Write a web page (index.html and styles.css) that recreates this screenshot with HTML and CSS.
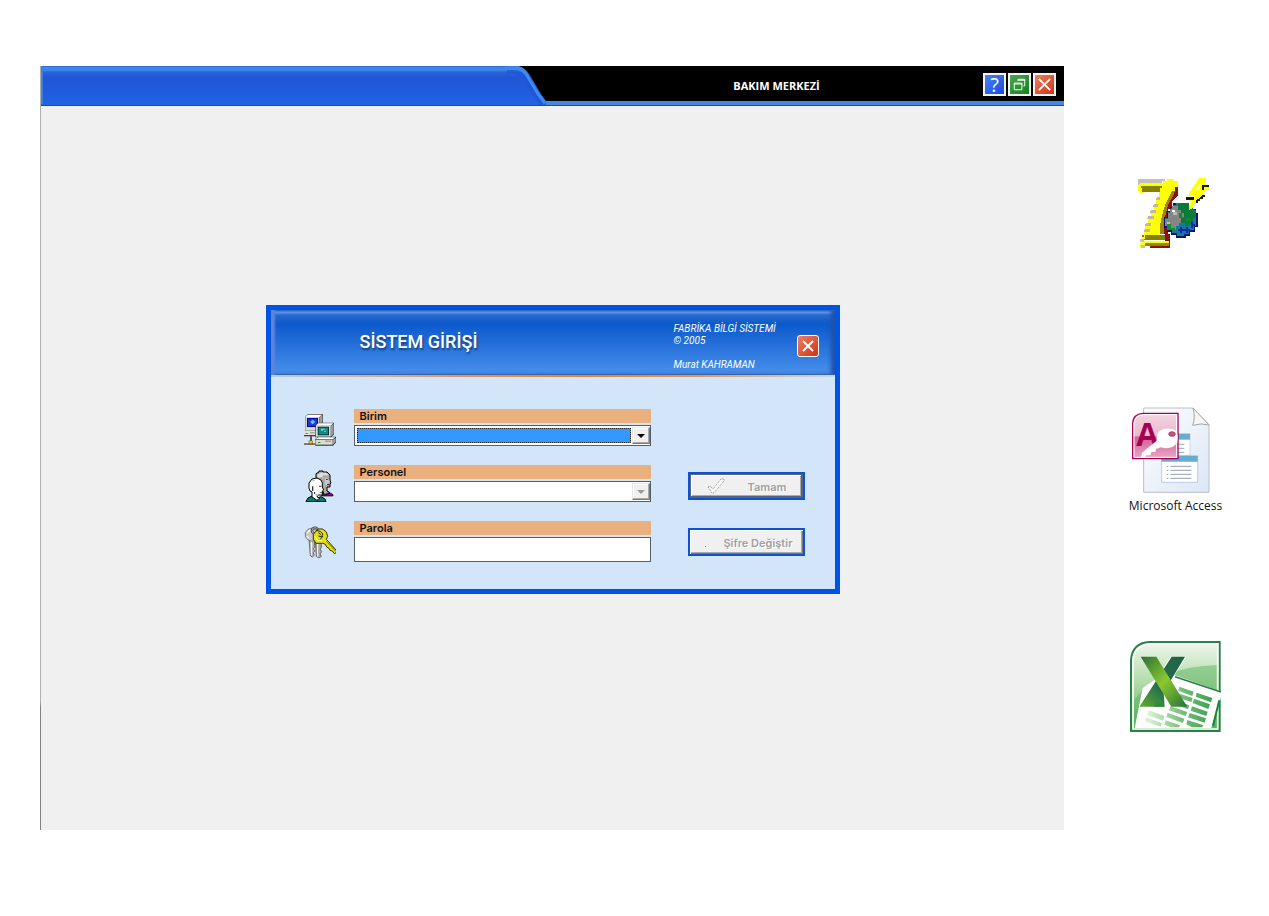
FILE: index.html
```html
<!DOCTYPE html>
<html lang="tr">
<head>
<meta charset="utf-8">
<title>Bakım Merkezi</title>
<link rel="stylesheet" href="styles.css">
</head>
<body class="desktop">
<main class="window">
  <header class="titlebar">
    <svg class="tab" viewBox="0 0 505 40" aria-hidden="true">
      <defs>
        <linearGradient id="tabFill" x1="0" y1="0" x2="0" y2="1">
          <stop offset="0" stop-color="#2860c8"/><stop offset=".03" stop-color="#3c88ea"/>
          <stop offset=".1" stop-color="#3c86e8"/><stop offset=".16" stop-color="#2a63dc"/>
          <stop offset=".3" stop-color="#2055d6"/><stop offset="1" stop-color="#2064e6"/>
        </linearGradient>
      </defs>
      <path d="M0 0H478Q486 3 490 11L500 28L505 35V40H0Z" fill="url(#tabFill)"/>
      <path d="M466 6H475Q482 8 486 16L500 39" fill="none" stroke="#2055d6" stroke-width="4" opacity=".7"/>
      <path d="M464 2H477Q483 4 487 11L497 28L504 37" fill="none" stroke="#3f8bed" stroke-width="3"/>
      <path d="M1 0V38" stroke="#3c80e4" stroke-width="2"/>
      <path d="M0 39.500H505" stroke="#1a4aac"/>
    </svg>
    <h1 class="app-name">BAKIM MERKEZİ</h1>
    <div class="controls">
      <button class="control help" type="button" aria-label="Yardım">?</button>
      <button class="control restore" type="button" aria-label="Geri yükle">
        <svg viewBox="0 0 20 20"><path d="M4.500 8.500H12.500V15.500H4.500ZM4 9.500H13M8.500 6V4.500H15.500V11.500H14M8 5.500H16" fill="none" stroke="#fff"/></svg>
      </button>
      <button class="control close" type="button" aria-label="Kapat">
        <svg viewBox="0 0 20 20"><path d="M4 4L16 16M16 4L4 16" stroke="#fff" stroke-width="2"/></svg>
      </button>
    </div>
  </header>
  <div class="workspace">
    <form class="dialog">
      <header class="banner">
        <h2 class="dialog-title">SİSTEM GİRİŞİ</h2>
        <p class="credits">FABRİKA BİLGİ SİSTEMİ<br>© 2005<br><br>Murat KAHRAMAN</p>
        <button class="control close dialog-close" type="button" aria-label="Pencereyi kapat">
          <svg viewBox="0 0 20 20"><path d="M5 5L15 15M15 5L5 15" stroke="#fff" stroke-width="2"/></svg>
        </button>
      </header>
      <div class="fields">
        <svg class="field-icon" viewBox="42 42 96 96" aria-hidden="true">
          <path d="M45 51L54 42H99V84L90 93H45Z" fill="#505050"/>
          <path d="M46 51L54 44H96L88 51Z" fill="#fff"/><path d="M46 51H87V90H46Z" fill="#d8d8d0"/><path d="M88 52L97 45V82L88 90Z" fill="#a0a098"/>
          <path d="M51 54H84V81H51Z" fill="#0000a0"/><path d="M54 57H81V78H54Z" fill="#1c38d8"/><path d="M65 60H71V63H74V69H71V72H65V69H62V63H65Z" fill="#70b8ff"/>
          <path d="M42 92H78V109H42Z" fill="#444"/><path d="M42 91H78V105H42Z" fill="#e0e0d8"/><path d="M47 99H53V102H47Z" fill="#00b020"/><path d="M60 97H74V100H60Z" fill="#888"/>
          <path d="M60 108H66V124H60Z" fill="#555"/><path d="M42 126H77V130H42Z" fill="#eee"/><path d="M42 130H77V134H42Z" fill="#444"/><path d="M56 122H68V133H56Z" fill="#8a5800"/><path d="M58 123H66V130H58Z" fill="#ffb818"/>
          <path d="M76 77L84 68H132V103L124 112H76Z" fill="#404040"/>
          <path d="M77 77L85 70H130L122 77Z" fill="#fff"/><path d="M78 77H122V110H78Z" fill="#dedede"/><path d="M123 77L131 71V102L123 109Z" fill="#999"/>
          <path d="M83 80H117V106H83Z" fill="#003838"/><path d="M86 83H114V103H86Z" fill="#168888"/><path d="M93 86H105V89H99V92H93ZM102 92H108V95H102Z" fill="#78d8c8"/>
          <path d="M76 117L84 110H138V127L129 137H76Z" fill="#303030"/><path d="M77 117L85 112H136L128 118Z" fill="#fff"/><path d="M77 119H128V134H77Z" fill="#dcdcd4"/><path d="M129 119L137 113V126L129 133Z" fill="#a0a0a0"/><path d="M84 126H91V129H84Z" fill="#00b020"/><path d="M105 122H124V125H105Z" fill="#888"/>
        </svg>
        <div class="field">
          <label for="birim">Birim</label>
          <div class="combo">
            <select id="birim" class="selected"><option></option></select>
            <span class="arrow" aria-hidden="true"></span>
          </div>
        </div>
        <svg class="field-icon" viewBox="42 210 96 96" aria-hidden="true">
          <path d="M95 279L113 274L129 284V288H95Z" fill="#880088" stroke="#000" stroke-width="2"/>
          <path d="M78 234V221L87 216V213H99V216H111L120 225V240L123 249L120 252V261H111V273L120 279L103 284L90 255Z" fill="#aaa" stroke="#000" stroke-width="3"/>
          <path d="M82 226L92 218H108L116 226H98V232H82Z" fill="#ddd"/>
          <path d="M105 235H113V241H118V248H113V255H105Z" fill="#ccc"/><path d="M108 237H113V240H108ZM111 252H119V255H111Z" fill="#333"/>
          <path d="M48 305L54 294L66 288L75 297L93 290L105 297L108 305Z" fill="#087878" stroke="#000" stroke-width="3"/>
          <path d="M57 264V249L66 237L81 234L93 240L97 249V261L101 270L97 273V285H84L81 291L90 294L81 301L66 291V276L60 273Z" fill="#fff" stroke="#000" stroke-width="3"/>
          <path d="M66 259H70V273H66ZM87 257H94V260H87ZM89 277H97V279H89ZM72 276H75V282H72Z" fill="#333"/>
          <path d="M77 281H85V288H77ZM66 241H75V244H66Z" fill="#bbb"/>
        </svg>
        <div class="field">
          <label for="personel">Personel</label>
          <div class="combo">
            <select id="personel" disabled><option></option></select>
            <span class="arrow muted" aria-hidden="true"></span>
          </div>
        </div>
        <button class="action raised" type="button" disabled>
          <svg class="tick" viewBox="0 0 18 17" aria-hidden="true"><path d="M1 9L3 8L6 11L14 1H17V3L7 15H5Z" fill="#fafafa" stroke="#888" stroke-dasharray="1 1"/></svg>
          <span>Tamam</span>
        </button>
        <svg class="field-icon" viewBox="42 78 96 96" aria-hidden="true">
          <path d="M57 115L61 167L67 171L73 166L70 158L75 153L70 147L74 141L73 115Z" fill="#b8b8b8" stroke="#333" stroke-width="2"/>
          <path d="M76 118L79 169L86 174L94 169L90 162L95 155L91 148L94 141V118Z" fill="#aaa" stroke="#333" stroke-width="2"/>
          <path d="M64 119V166M83 124V170" stroke="#fff" stroke-width="3"/>
          <path d="M66 84L55 87L46 97V110L54 120L66 124L78 119L84 108L79 91Z" fill="#c8c8c8" stroke="#555" stroke-width="2"/>
          <path d="M52 98L60 90M51 108L57 115" stroke="#fff" stroke-width="4"/>
          <circle cx="75" cy="92" r="9" fill="none" stroke="#333" stroke-width="7"/><circle cx="75" cy="92" r="9" fill="none" stroke="#bbb" stroke-width="3"/>
          <path d="M84 87H98L109 96L113 109L109 118L139 151V158L133 161L127 153L120 151L117 145L111 142L105 132L98 130L79 130L70 119V103Z" fill="#e3df16" stroke="#333300" stroke-width="3"/>
          <path d="M108 123L136 153" stroke="#8c8700" stroke-width="3"/><path d="M75 108L83 122H96" fill="none" stroke="#ffff80" stroke-width="4"/>
          <path d="M80 91L92 95L99 102L94 110L85 108M91 118L99 108M85 98L93 104" fill="none" stroke="#222" stroke-width="3"/>
        </svg>
        <div class="field">
          <label for="parola">Parola</label>
          <input id="parola" class="password" type="password">
        </div>
        <button class="action" type="button" disabled><span class="dot" aria-hidden="true"></span><span>Şifre Değiştir</span></button>
      </div>
    </form>
  </div>
</main>
<aside class="shortcuts">
  <svg class="shortcut-seven" viewBox="36 36 216 216" shape-rendering="crispEdges" role="img" aria-label="7">
    <path d="M148 66H159V90L150 102L141 108V132H129V207H135V249H75V240H120V207H112V160L124 117L139 81Z" fill="#901010"/>
    <path d="M39 42H120V48H111V54H45V66H39Z" fill="#c0c0c0"/>
    <path d="M39 60L48 54H114V48H126V42H147V48H159V66H150V81H141L130 108L123 129L117 168V207H57V192H60V177H69V159H78V138H87V120H93V99H102V81H54V84H45V78H39Z" fill="#ff0"/>
    <path d="M48 63H111V69H105V81H51V69H48Z" fill="#858000"/>
    <path d="M141 78H150L144 93L132 114L126 132L117 168V207H105V180L111 153L120 120Z" fill="#9c8700"/>
    <path d="M96 96H105V105H93ZM87 117H100V126H84ZM78 135H94V144H75ZM69 153H87V163H66ZM63 174H78V183H60ZM60 192H75V200H57Z" fill="#c0b8a0"/>
    <path d="M51 209H120V225H51Z" fill="#858000"/><path d="M57 204H102V210H60V222H54V228H132V234H60V249H45V234H51V216H57Z" fill="#ff0"/>
    <path d="M45 222H57V231H45ZM48 240H60V249H48Z" fill="#c0c0c0"/><path d="M60 234H132V243H60Z" fill="#908800"/>
    <path d="M153 114H192V120H204V132H213V144H219V186H210V201H195V213H183V219H153V210H138V201H126V189H117V156H126V138H135V126H144V114Z" fill="#001878"/>
    <path d="M153 114H192V123H204V135H213V183H207V195H192V207H177V213H156V204H141V195H129V183H120V159H129V141H138V129H144V120H153Z" fill="#1479a2"/>
    <path d="M141 123H168V141H177V156H171V174H162V183H153V195H138V183H120V162H129V144H135V132H141Z" fill="#858585"/>
    <path d="M159 114H192V132H207V141H213V159H204V177H192V183H180V174H168V159H177V144H168V135H159Z" fill="#087b38"/>
    <path d="M144 141H156V150H144ZM126 171H135V180H126Z" fill="#bbb"/><path d="M141 135H150V142H141Z" fill="#fff"/>
    <path d="M126 177H138V189H150V201H141V195H126ZM162 144H171V159H162ZM183 159H195V168H183Z" fill="#158a30"/>
    <path d="M165 186H171V192H177V198H171V204H165V198H159V192H165ZM183 186H189V192H195V198H189V204H183V198H177V192H183ZM198 171H204V177H210V183H204V189H198Z" fill="#042ca0"/>
    <path d="M222 39H243V51L237 66H252V75H243L231 93L219 105L204 120V129L192 135V123L201 108H195V102H207V93H189L195 81L213 54Z" fill="#ff0"/>
    <path d="M183 96H207V105H183ZM231 60H252V67H237V75H231ZM231 90H240V96H234V102H225V108H219V114H213V105L225 99Z" fill="#181800"/>
    <path d="M213 66H219V60H225V54H231V63H225V75H213Z" fill="#ffffa0"/>
  </svg>
  <figure class="shortcut-access">
    <svg class="access-icon" viewBox="24 15 252 270" aria-hidden="true">
      <defs>
        <linearGradient id="page" x1="0" y1="0" x2="1" y2="1"><stop stop-color="#fff"/><stop offset="1" stop-color="#dce6f6"/></linearGradient>
        <linearGradient id="rose" x1="0" y1="0" x2="0" y2="1"><stop stop-color="#f3d4e1"/><stop offset=".5" stop-color="#eabace"/><stop offset=".52" stop-color="#d35f93"/><stop offset="1" stop-color="#e9a8c6"/></linearGradient>
      </defs>
      <path d="M68 24H216L264 74V277H68Z" fill="url(#page)" stroke="#b8bec8" stroke-width="3"/>
      <path d="M216 24Q224 53 215 76Q242 68 264 75Z" fill="#f6f6f6" stroke="#a5a5a5" stroke-width="3"/>
      <path d="M124 102H207V166H124Z" fill="#fff" stroke="#b6c8de" stroke-width="2"/><path d="M124 101H207V119H124Z" fill="#65acd3"/>
      <path d="M170 133H190M170 145H190M170 157H190" stroke="#9ba6b5" stroke-width="3"/>
      <path d="M122 168H230V247H122Z" fill="#fff" stroke="#9fb8d8" stroke-width="2"/><path d="M122 167H230V185H122Z" fill="#65acd3"/>
      <path d="M137 199H142M137 211H142M137 223H142M137 235H142M148 199H211M148 211H211M148 223H211M148 235H211" stroke="#949eac" stroke-width="3"/>
      <path d="M35 176V69Q37 42 65 40H171V176Z" fill="url(#rose)" stroke="#a60052" stroke-width="4"/>
      <path d="M39 172V71Q41 47 66 44H167V172Z" fill="none" stroke="#fff" stroke-width="3"/>
      <text class="access-letter" x="46" y="138">A</text>
      <path d="M117 92Q140 80 163 91Q174 104 168 130Q151 151 119 142L105 147L103 156H91L88 166H76L71 174H60L63 158L107 122Q105 100 117 92Z" fill="#fff"/>
      <ellipse cx="153" cy="102" rx="10" ry="7" fill="#c65586" stroke="#9b205c" stroke-width="2"/>
    </svg>
    <figcaption>Microsoft Access</figcaption>
  </figure>
  <svg class="shortcut-excel" viewBox="27 30 282 279" role="img" aria-label="Microsoft Excel">
    <defs>
      <linearGradient id="sheet" x1="0" y1="0" x2="0" y2="1"><stop stop-color="#f0f7ed"/><stop offset=".45" stop-color="#b3dba9"/><stop offset="1" stop-color="#57b25f"/></linearGradient>
      <linearGradient id="lime" x1="0" y1="0" x2="1" y2="1"><stop stop-color="#286e36"/><stop offset=".5" stop-color="#8bc82f"/><stop offset="1" stop-color="#25733b"/></linearGradient>
      <linearGradient id="forest" x1="1" y1="0" x2="0" y2="1"><stop stop-color="#216344"/><stop offset=".6" stop-color="#26704b"/><stop offset="1" stop-color="#64ad32"/></linearGradient>
      <linearGradient id="cells" gradientUnits="userSpaceOnUse" x1="90" y1="0" x2="285" y2="0"><stop stop-color="#d7efd2"/><stop offset=".5" stop-color="#77bd78"/><stop offset="1" stop-color="#35a04d"/></linearGradient>
    </defs>
    <path d="M33 303V91Q36 39 88 36H299V303Z" fill="url(#sheet)" stroke="#288149" stroke-width="6"/>
    <path d="M39 297V94Q41 46 90 42H293V297Z" fill="none" stroke="#fff" stroke-width="5"/>
    <path d="M42 210Q120 110 290 105V294H42Z" fill="#50af58" opacity=".45"/>
    <path d="M137 126L308 186L274 294H44L68 174Z" fill="#fff"/>
    <path d="M165 140L303 186" stroke="#287f43" stroke-width="5"/><path d="M298 211L279 287" stroke="#16843c" stroke-width="6"/>
    <g fill="url(#cells)">
      <path d="M178 170L221 185L217 198L175 182ZM230 188L277 204L273 217L227 200ZM171 189L218 204L214 216L167 201ZM222 206L270 223L265 237L218 219ZM158 208L208 226L204 238L154 220ZM216 229L263 245L259 258L212 242ZM151 229L202 246L197 258L147 241ZM209 249L258 265L254 278L204 262ZM143 248L193 266L189 279L139 261ZM202 270L250 286L246 292H216L199 283ZM86 241L133 258L129 272L82 255ZM137 271L180 286L177 292H153L133 284ZM79 262L126 280L122 290L75 274Z"/>
    </g>
    <path d="M151 80H199L144 166L133 207V230H57L112 145Z" fill="#fff"/>
    <path d="M155 80H195L131 187L134 230H58Z" fill="url(#forest)"/>
    <path d="M62 80H109L202 230H154Z" fill="url(#lime)"/>
    <path d="M117 202L134 230H101Z" fill="#318b41"/>
  </svg>
</aside>
</body>
</html>
```

FILE: styles.css
```css
* { box-sizing: border-box; }

.desktop {
  display: grid;
  grid-template-columns: 1fr 205px;
  min-height: 100vh;
  margin: 0;
  padding: 66px 0 86px 40px;
  background: #fff;
  font-family: "Liberation Sans", Arial, sans-serif;
}

.window {
  display: flex;
  flex-direction: column;
  border-left: 1px solid;
  border-image: linear-gradient(to bottom, #b0b0b0 83%, #808080 84%) 1;
  border-width: 0 0 0 1px;
  background: #f0f0f0;
}

.titlebar {
  display: flex;
  height: 40px;
  background: linear-gradient(to bottom, #000 35px, #4487e7 35px, #4487e7 39px, #1b4ba5 39px);
}

.tab { flex: none; width: 505px; height: 40px; }

.app-name {
  flex: 1;
  margin: 0;
  padding-left: 24px;
  color: #fff;
  font: bold 11px/39px "Open Sans", sans-serif;
  text-align: center;
}

.controls { display: flex; gap: 2px; padding: 7px 8px 0 0; }

.control {
  display: grid;
  place-items: center;
  width: 23px;
  height: 23px;
  padding: 0;
  border: 2px solid #f4f4f4;
  color: #fff;
}

.control svg { width: 19px; height: 19px; }
.help { background: linear-gradient(135deg, #4a82f4, #164be0); font: 20px/19px "Open Sans", sans-serif; }
.restore { background: linear-gradient(135deg, #4ba653, #12821c); }
.close { background: linear-gradient(135deg, #ee8064, #cf3210); }

.workspace {
  display: grid;
  flex: 1;
  place-items: center;
  padding-bottom: 37px;
}

.dialog {
  width: 574px;
  border: 5px solid #0054e3;
  background: #d3e5f9;
}

.banner {
  display: flex;
  height: 67px;
  border-bottom: 2px solid;
  border-image: linear-gradient(to right, #b9cbe2, #d99864 35%, #d9863e 55%, #d99864 75%, #c8d8ea) 1;
  border-width: 0 0 2px;
  background: linear-gradient(to bottom, #1254c8, #6ba6f0 2px, #2869ce 5px, #0c59cc 14px, #4890ec 64px, #315f9c 64px);
  box-shadow: inset 4px 0 2px #5f83d8, inset -4px 0 4px #1e50a8;
  color: #fff;
}

.dialog-title {
  flex: 1;
  margin: 0;
  padding-left: 89px;
  font: 500 18px/64px Roboto, sans-serif;
  text-shadow: 1px 2px 2px #123e82;
}

.credits { width: 123px; margin: 0; padding-top: 13px; font: italic 10px/12px Roboto, sans-serif; white-space: nowrap; }
.dialog-close { width: 22px; height: 22px; margin: 25px 16px 0 0; border: 1px solid #fff; border-radius: 3px; }
.dialog-close svg { width: 20px; height: 20px; }

.fields {
  display: grid;
  grid-template-columns: 33px 297px 1fr;
  grid-template-rows: 37px 37px 41px;
  gap: 19px 17px;
  padding: 32px 30px 27px 33px;
}

.field-icon { grid-column: 1; width: 32px; height: 32px; margin-top: 5px; }
.field { grid-column: 2; display: flex; flex-direction: column; gap: 2px; }
.field label { height: 14px; padding-left: 6px; background: #eab17e; color: #111; font: 600 11px/14px Inter, sans-serif; }

.combo { display: flex; height: 21px; padding: 2px 0 2px 2px; border: 1px solid #555d68; background: #fff; }
.combo select { flex: 1; min-width: 0; padding: 0; border: 0; outline: 0; background: #fff; appearance: none; }
.combo .selected { border: 1px dotted #222; background: #3399ff; }

.arrow {
  display: grid;
  place-items: center;
  width: 18px;
  margin: -1px 0 -1px 1px;
  border: 1px solid;
  border-color: #e8e8e8 #777 #777 #e8e8e8;
  background: #f0f0f0;
  box-shadow: inset -1px -1px #aaa, inset 1px 1px #fff;
}

.arrow::after { content: ""; border: solid transparent; border-width: 4px 4px 0; border-top-color: #000; }
.muted::after { border-top-color: #999; }

.password { width: 100%; height: 25px; padding: 2px 5px; border: 1px solid #555d68; background: #fff; }

.action {
  grid-column: 3;
  display: flex;
  align-items: center;
  justify-content: space-between;
  width: 117px;
  height: 28px;
  margin: 7px 0 0 auto;
  padding: 1px 10px 0 15px;
  border: 2px solid #0c52d2;
  background: #f0f0f0;
  box-shadow: inset 1px 1px #fff, inset -1px -1px #777, inset -2px -2px #aaa;
  color: #a0a0a0;
  font: 600 11px/14px Inter, sans-serif;
  text-shadow: 1px 1px #fff;
}

.raised { padding: 1px 16px 0 17px; box-shadow: inset 1px 1px #5a6785, inset -2px -2px #56627d, inset 2px 2px #fff, inset -3px -3px #aaa; }
.tick { width: 18px; height: 17px; }
.dot { width: 1px; height: 1px; margin-top: 8px; background: #888; }

.shortcuts { display: flex; flex-direction: column; align-items: center; padding: 111px 0 0 18px; }
.shortcut-seven { flex: none; width: 72px; height: 72px; margin-right: 6px; }
.shortcut-access { margin: 156px 0 0; text-align: center; }
.access-icon { display: block; width: 84px; height: 90px; }
.shortcut-access figcaption { margin-top: 2px; color: #111; font: 12px/18px "Open Sans", sans-serif; white-space: nowrap; }
.access-letter { fill: #a60052; font: bold 96px "Open Sans", sans-serif; }
.shortcut-excel { flex: none; width: 94px; height: 93px; margin-top: 125px; }
```
